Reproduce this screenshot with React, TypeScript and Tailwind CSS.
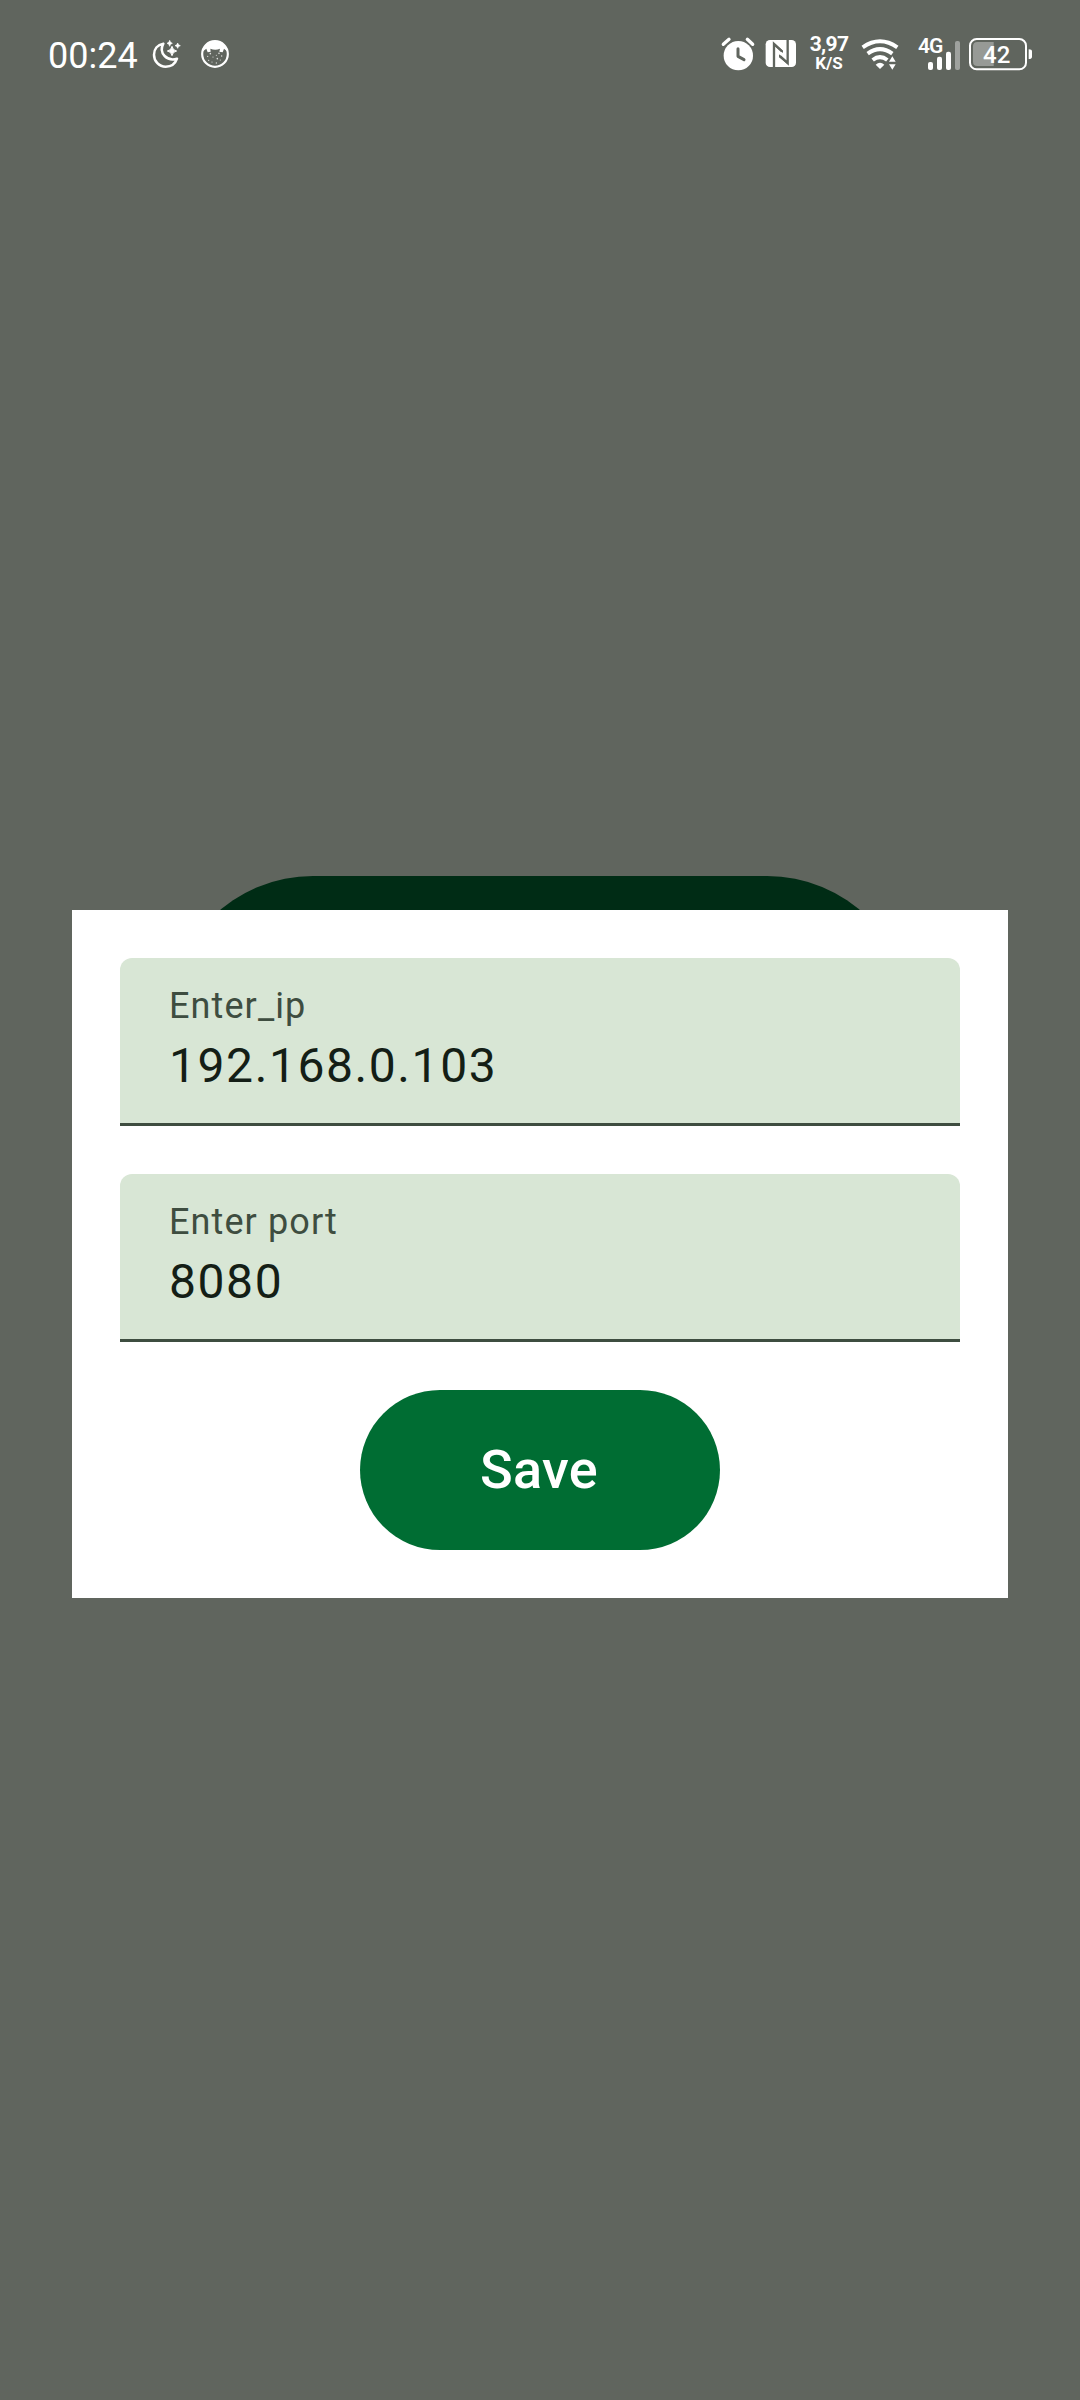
import React from "react";

function MoonIcon() {
  return (
    <svg className="ml-[12px] h-[70px] w-[32px] shrink-0" viewBox="363 0 96 210" fill="none">
      <path
        d="M400 71 C382 74 372 88 372 104 C372 124 387 140 407 140 C423 140 436 131 441 116 C429 120 414 118 404 108 C394 98 393 84 400 71Z"
        stroke="#fff"
        strokeWidth="7.5"
        strokeLinejoin="round"
      />
      <path d="M426 79 Q428 91 440 93 Q428 95 426 107 Q424 95 412 93 Q424 91 426 79Z" fill="#fff" stroke="#fff" strokeWidth="3" />
      <path d="M419 61 Q420 69 427 70 Q420 71 419 79 Q418 71 411 70 Q418 69 419 61Z" fill="#fff" stroke="#fff" strokeWidth="2" />
      <path d="M443 69 Q444 76 451 77 Q444 78 443 85 Q442 78 435 77 Q442 76 443 69Z" fill="#fff" stroke="#fff" strokeWidth="2" />
    </svg>
  );
}

function FaceIcon() {
  return (
    <svg className="ml-[17px] h-[70px] w-[30px] shrink-0" viewBox="510 0 90 210" fill="none">
      <circle cx="555" cy="102" r="38.5" stroke="#fff" strokeWidth="6.5" />
      <path d="M516 96 C519 77 535 63 555 63 C575 63 591 77 594 96 L582 86 L578 97 L568 95 L570 86 Q556 92 541 86 L542 95 L533 97 L529 86Z" fill="#fff" />
      <g fill="#fff" opacity=".8">
        <circle cx="541" cy="101" r="2.4" />
        <circle cx="567" cy="100" r="2.4" />
        <circle cx="533" cy="109" r="2" />
        <circle cx="549" cy="111" r="1.8" />
        <circle cx="559" cy="106" r="1.6" />
        <circle cx="575" cy="108" r="2.2" />
        <circle cx="536" cy="121" r="2" />
        <circle cx="562" cy="116" r="2.4" />
        <circle cx="571" cy="120" r="1.8" />
        <circle cx="546" cy="126" r="1.8" />
        <circle cx="559" cy="129" r="2" />
      </g>
    </svg>
  );
}

function AlarmIcon() {
  return (
    <svg className="h-[70px] w-[36px] shrink-0" viewBox="60 0 108 210" fill="none">
      <circle cx="115" cy="107" r="44" fill="#fff" />
      <path d="M70 73 L87 58 M142 58 L158 73" stroke="#fff" strokeWidth="10" strokeLinecap="round" />
      <path d="M114 86 V109 L132 119" stroke="#60655e" strokeWidth="9" strokeLinecap="round" strokeLinejoin="round" />
    </svg>
  );
}

function NfcIcon() {
  return (
    <svg className="ml-[8px] h-[70px] w-[34px] shrink-0" viewBox="192 0 102 210" fill="none">
      <rect x="197" y="60" width="91" height="81" rx="13" fill="#fff" />
      <path d="M222 141 V72 L246 94 M263 60 V129 L240 108" stroke="#60655e" strokeWidth="7" />
      <path d="M222 68 L249 92 V99 L226 80Z M263 133 L237 112 V103 L260 122Z" fill="#60655e" />
    </svg>
  );
}

function WifiIcon() {
  return (
    <svg className="ml-[9px] h-[70px] w-[40px] shrink-0" viewBox="480 0 120 210" fill="none">
      <path d="M488 82 Q540 46 592 82" stroke="#fff" strokeWidth="12" />
      <path d="M503 101 Q540 74 577 101" stroke="#fff" strokeWidth="12" />
      <path d="M518 120 Q540 103 562 120" stroke="#fff" strokeWidth="12" />
      <path d="M527 134 Q540 123 553 134 L540 147Z" fill="#fff" />
      <path d="M577 109 L587 125 H567Z M577 149 L587 133 H567Z" fill="#fff" />
    </svg>
  );
}

function Signal() {
  return (
    <div className="relative ml-[17px] h-[70px] w-[44px] shrink-0">
      <svg className="h-[70px] w-[44px]" viewBox="81 0 132 210" fill="#fff">
        <rect x="114" y="126" width="15" height="24" rx="6" />
        <rect x="141" y="110" width="15" height="40" rx="6" />
        <rect x="168" y="95" width="15" height="55" rx="6" />
        <rect x="195" y="63" width="15" height="87" rx="6" opacity=".4" />
      </svg>
      <span className="absolute left-[1px] top-[14px] text-[21px] font-semibold leading-[24px] tracking-[-0.9px]">4G</span>
    </div>
  );
}

function Battery() {
  return (
    <div className="relative ml-[7px] h-[70px] w-[66px] shrink-0">
      <svg className="h-[70px] w-[66px]" viewBox="234 0 198 210" fill="none">
        <rect x="240" y="57" width="168" height="91" rx="20" stroke="#fff" strokeWidth="6" />
        <path d="M311 66 V138 H262 Q249 138 249 125 V79 Q249 66 262 66Z" fill="#fff" opacity=".35" />
        <path d="M416 88 Q426 88 426 94 V110 Q426 117 416 117Z" fill="#fff" />
      </svg>
      <span className="absolute left-[15px] top-[20px] text-[24px] font-medium leading-[30px]">42</span>
    </div>
  );
}

function StatusBar() {
  return (
    <header className="flex h-[110px] items-center justify-between pl-[48px] pr-[46px] text-white">
      <div className="flex items-center">
        <span className="w-[91px] whitespace-nowrap pt-[2px] text-[36px] leading-[42px]">00:24</span>
        <MoonIcon />
        <FaceIcon />
      </div>
      <div className="flex items-center">
        <AlarmIcon />
        <NfcIcon />
        <div className="ml-[10px] flex w-[43px] flex-col items-center whitespace-nowrap pb-[5px] pr-[1px] font-bold">
          <span className="text-[21px] leading-[22px] tracking-[-0.7px]">3,97</span>
          <span className="text-[17px] leading-[17px]">K/S</span>
        </div>
        <WifiIcon />
        <Signal />
        <Battery />
      </div>
    </header>
  );
}

function Field({ label, value }: { label: string; value: string }) {
  return (
    <div className="flex h-[168px] flex-col rounded-t-[12px] border-b-[3px] border-[#3e4d40] bg-[#d8e6d5] px-[49px] pt-[24px]">
      <label className="text-[36px] leading-[48px] tracking-[1.1px] text-[#3e4d40]">{label}</label>
      <span className="text-[48px] leading-[72px] tracking-[1.58px] text-[#141e16]">{value}</span>
    </div>
  );
}

export default function App() {
  return (
    <div className="relative h-[2400px] w-[1080px] overflow-hidden bg-[#60655e] font-['Roboto',sans-serif]">
      <StatusBar />
      <main className="flex flex-col items-center pt-[766px]">
        <div className="h-[288px] w-[742px] rounded-full bg-[#002c15]" />
      </main>
      <div role="dialog" className="absolute left-[72px] top-[910px] flex w-[936px] flex-col gap-[48px] bg-white p-[48px]">
        <Field label="Enter_ip" value="192.168.0.103" />
        <Field label="Enter port" value="8080" />
        <button className="h-[160px] w-[360px] self-center rounded-full bg-[#006d33] pr-[2px] text-[54px] font-medium leading-[60px] tracking-[0.3px] text-white">
          Save
        </button>
      </div>
    </div>
  );
}
